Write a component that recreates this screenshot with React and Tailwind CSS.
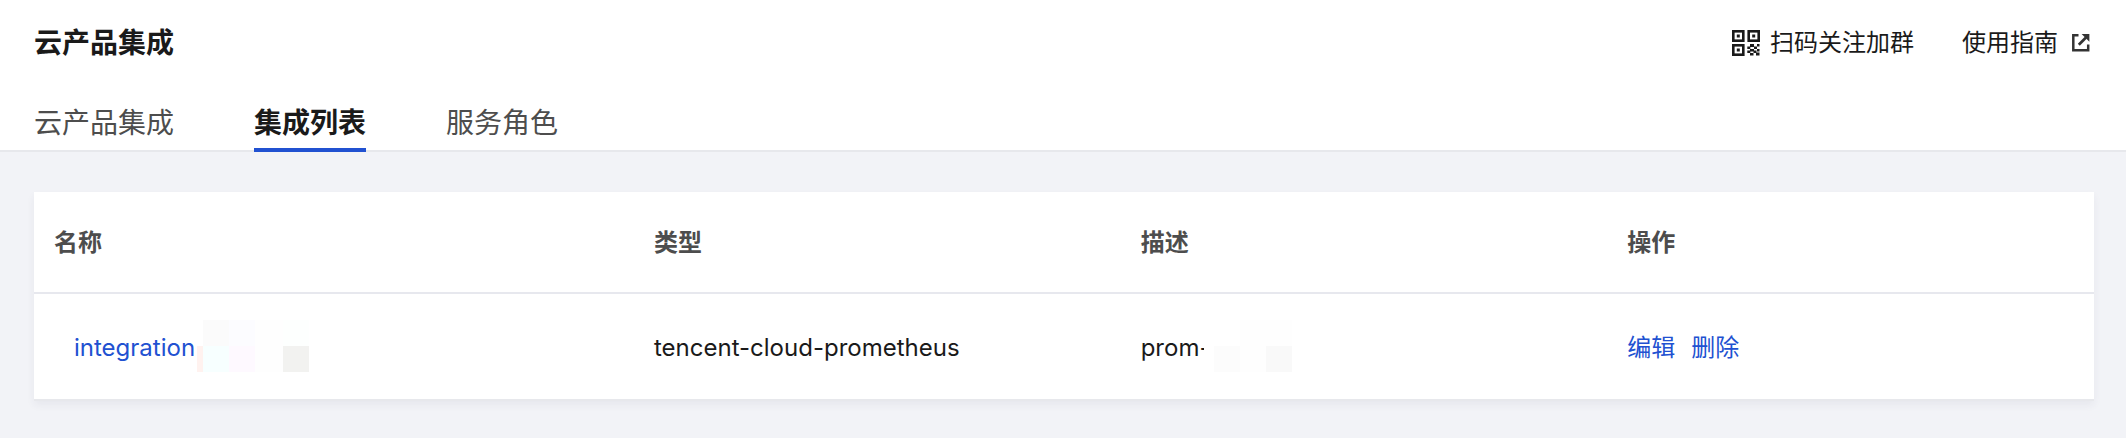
const tabs = [
  { label: '云产品集成', active: false },
  { label: '集成列表', active: true },
  { label: '服务角色', active: false },
];

function QrIcon() {
  return (
    <svg className="h-[26px] w-7" viewBox="0 0 28 26" aria-hidden="true">
      <g fill="none" stroke="#1a1a1a" strokeWidth="2.600">
        <rect x="1.300" y="1.300" width="10" height="9.400" />
        <rect x="16.700" y="1.300" width="10" height="9.400" />
        <rect x="1.300" y="15.300" width="10" height="9.400" />
      </g>
      <g fill="#1a1a1a">
        <path d="M4.800 4.500h3v3h-3zM20.200 4.500h3v3h-3zM4.800 18.500h3v3h-3z" />
        <path d="M18 14h4v3h-4zM25 14h2.500v2.500H25zM15.300 16.500h3v2.500h-3zM22 16.500h3v2.500h-3zM18 19h4v2.500h-4zM25 19h2.500v2.500H25zM15.300 20.500h3v2.500h-3zM21.500 20.500h3v2.500h-3zM18 23h3.500v2.500H18zM24 22.500h3.500v3H24z" />
      </g>
    </svg>
  );
}

function ExternalIcon() {
  return (
    <svg className="h-[18px] w-[18px]" viewBox="0 0 18 18" aria-hidden="true">
      <path d="M6.500 1.300H1.300v14.900h14.900V10.500" fill="none" stroke="#333" strokeWidth="2.500" />
      <path d="M6.800 10.700 14 3.500" fill="none" stroke="#333" strokeWidth="2.700" />
      <path d="M9.600 0h7.800v7.800z" fill="#333" />
    </svg>
  );
}

export default function App() {
  return (
    <div className="min-h-screen bg-[#f2f3f7] font-['Inter','Noto_Sans_CJK_SC',sans-serif] text-2xl text-[#1a1a1a]">
      <header className="border-b-2 border-[#e7e8ec] bg-white">
        <div className="flex h-[86px] items-center justify-between pr-9 pl-[34px]">
          <h1 className="text-[28px] leading-10 font-bold">云产品集成</h1>
          <div className="flex items-center gap-12">
            <button type="button" className="flex items-center gap-[10px] leading-9">
              <QrIcon />
              扫码关注加群
            </button>
            <a href="#guide" className="flex items-center gap-[14px] leading-9">
              使用指南
              <ExternalIcon />
            </a>
          </div>
        </div>
        <nav className="-mb-0.5 flex gap-20 pt-[14px] pl-[34px] text-[28px]">
          {tabs.map((tab) => (
            <a
              key={tab.label}
              href="#tab"
              aria-current={tab.active ? 'page' : undefined}
              className={
                tab.active
                  ? 'flex h-[52px] items-center border-b-4 border-[#2151d1] font-bold'
                  : 'flex h-[52px] items-center border-b-4 border-transparent text-[#4d4d4d]'
              }
            >
              {tab.label}
            </a>
          ))}
        </nav>
      </header>
      <main className="pt-10 pr-8 pb-9 pl-[34px]">
        <table className="w-full table-fixed border-separate border-spacing-0 bg-white text-left shadow-[0_4px_8px_rgba(54,58,80,0.06)]">
          <thead>
            <tr className="text-[#4d4d4d] *:h-[102px] *:border-b-2 *:border-[#e7e8ee] *:px-5 *:pt-0.5 *:font-bold">
              <th scope="col" className="w-[600px]">名称</th>
              <th scope="col">类型</th>
              <th scope="col">描述</th>
              <th scope="col">操作</th>
            </tr>
          </thead>
          <tbody>
            <tr className="*:h-[107px] *:border-b-2 *:border-[#e7e8ec] *:pt-0.5 *:pr-5">
              <td className="pl-10">
                <div className="flex items-center">
                  <a href="#integration" className="text-[#2151d1]">integration</a>
                  <div className="mb-1 ml-0.5 grid grid-cols-[6px_26px_26px_28px_26px] grid-rows-[26px_26px]" aria-hidden="true">
                    <span />
                    <span className="bg-[#fbfbfb]" />
                    <span className="bg-[#fcfcff]" />
                    <span className="bg-[#fefefe]" />
                    <span className="bg-[#fdfffe]" />
                    <span className="bg-[#fff2ef]" />
                    <span className="bg-[#f7ffff]" />
                    <span className="bg-[#fef9ff]" />
                    <span className="bg-[#fefefe]" />
                    <span className="bg-[#f2f2f0]" />
                  </div>
                </div>
              </td>
              <td className="pl-5">tencent-cloud-prometheus</td>
              <td className="pl-5">
                <div className="flex items-center">
                  <span>prom-</span>
                  <div className="z-10 mb-1 -ml-1.5 grid grid-cols-[10px_26px_26px_26px] grid-rows-[26px_26px]" aria-hidden="true">
                    <span className="bg-white" />
                    <span className="bg-white" />
                    <span className="bg-[#fefefe]" />
                    <span className="bg-[#fefefe]" />
                    <span className="bg-white" />
                    <span className="bg-[#fcfcfc]" />
                    <span className="bg-[#fefefe]" />
                    <span className="bg-[#f9f9f9]" />
                  </div>
                </div>
              </td>
              <td className="pl-5">
                <div className="flex gap-4 text-[#2151d1]">
                  <button type="button">编辑</button>
                  <button type="button">删除</button>
                </div>
              </td>
            </tr>
          </tbody>
        </table>
      </main>
    </div>
  );
}
